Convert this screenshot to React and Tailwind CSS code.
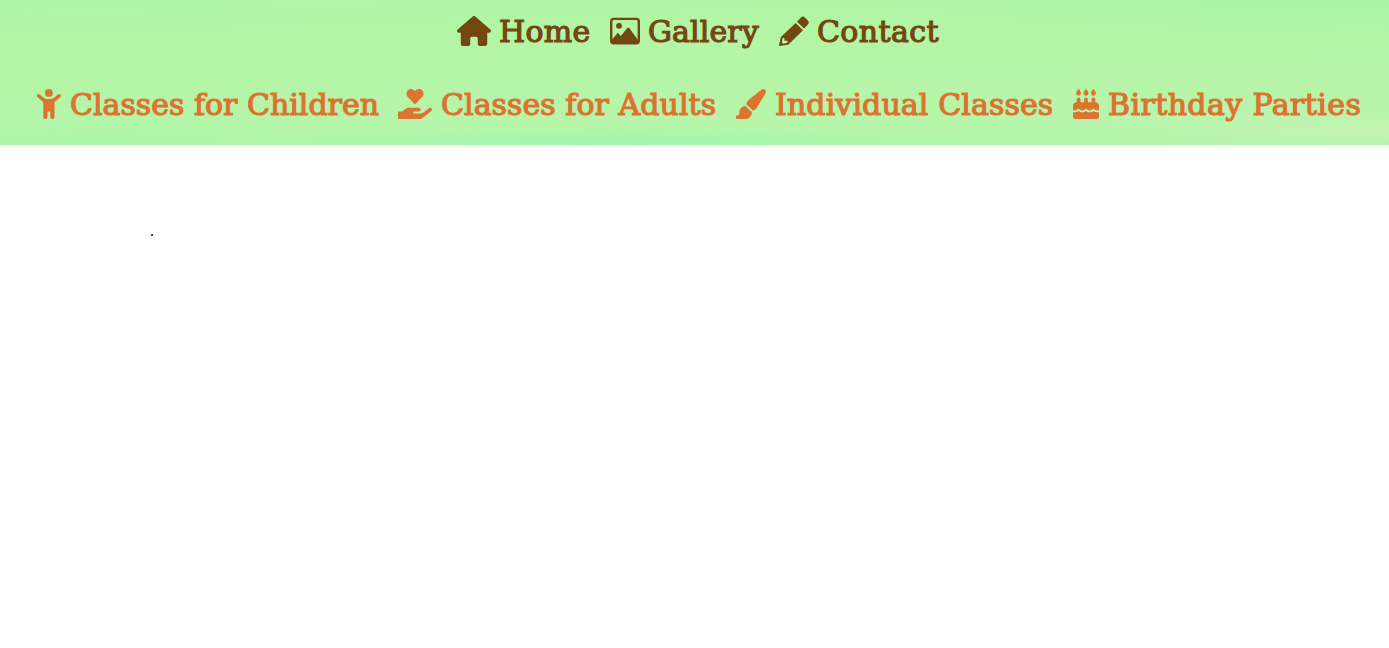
import { FaHouse, FaPaintbrush, FaCakeCandles } from "react-icons/fa6";
import { FaHandHoldingHeart } from "react-icons/fa";

function ImageIcon({ className }) {
  return (
    <svg viewBox="0 0 30 30" fill="currentColor" className={className}>
      <rect x="1.2" y="2.9" width="27.6" height="24.4" rx="2.6" fill="none" stroke="currentColor" strokeWidth="2.4" />
      <circle cx="9" cy="9.8" r="2.9" />
      <path d="M2 27V23.6L7.4 17.3Q7.9 16.8 8.4 17.3L10.8 20L17.6 11.8Q18.3 11 19 11.8L28 24V27Z" />
    </svg>
  );
}

function PencilIcon({ className }) {
  return (
    <svg viewBox="0 0 30 30" fill="currentColor" className={className}>
      <path d="M18 5.7L22 1.3Q23.8-.5 25.6 1.3L28.9 4.6Q30.6 6.5 28.9 8.4L25 12.4Z" />
      <path fillRule="evenodd" d="M16.7 6.9L24 14.3L10 28Q9.4 28.5 8.6 28.7L.8 30Q-.1 30.1 0 29.2L1.6 21.9Q1.8 21 2.4 20.4ZM4.1 22L5.4 22V24.8H8.5V26.2L7.8 26.9L4.2 27.7L2.8 26.4L3.5 22.6Z" />
    </svg>
  );
}

function ChildIcon({ className }) {
  return (
    <svg viewBox="0 0 24 30" fill="currentColor" className={className}>
      <circle cx="11.9" cy="3.9" r="3.9" />
      <path d="M1.8 6.8L6.4 10.8Q7.8 11.8 9.6 11.8H14.2Q16 11.8 17.4 10.8L22 6.8" fill="none" stroke="currentColor" strokeWidth="3.6" strokeLinecap="round" strokeLinejoin="round" />
      <path d="M6.3 11H17.5V28.1a2.1 1.9 0 0 1-4.2 0V22.5H10.5V28.1a2.1 1.9 0 0 1-4.2 0Z" />
    </svg>
  );
}

const mainLinks = [
  { label: "Home", Icon: FaHouse, box: "w-[153px]", icon: "w-[34px]", text: "ml-[8px] tracking-[0.3px]" },
  { label: "Gallery", Icon: ImageIcon, box: "w-[169px]", icon: "w-[30px]", text: "ml-[8px] tracking-[0.1px]" },
  { label: "Contact", Icon: PencilIcon, box: "w-[162px]", icon: "w-[30px]", text: "ml-[8px] tracking-[0.4px]" },
];

const classLinks = [
  { label: "Classes for Children", Icon: ChildIcon, box: "w-[361px]", icon: "w-[24px]", text: "ml-[9px]" },
  { label: "Classes for Adults", Icon: FaHandHoldingHeart, box: "w-[336px]", icon: "w-[34px]", text: "ml-[9px] tracking-[0.05px]" },
  { label: "Individual Classes", Icon: FaPaintbrush, box: "w-[339px]", icon: "w-[32px]", text: "ml-[9px] tracking-[0.1px]" },
  { label: "Birthday Parties", Icon: FaCakeCandles, box: "w-[290px]", icon: "w-[26px]", text: "ml-[9px] tracking-[0.4px]" },
];

function NavLink({ label, Icon, box, icon, text }) {
  return (
    <a className={"flex shrink-0 items-center whitespace-nowrap " + box}>
      <Icon preserveAspectRatio="none" className={"h-[30px] shrink-0 " + icon} />
      <span className={"pt-[2px] leading-[40px] [-webkit-text-stroke:1.2px_currentColor] " + text}>{label}</span>
    </a>
  );
}

export default function App() {
  return (
    <div className="min-h-[648px] bg-white font-['DejaVu_Serif',serif] text-[30px]">
      <header className="h-[145px] overflow-hidden bg-[#b4f6a8] bg-[radial-gradient(ellipse_380px_22px_at_610px_145px,#a2f6ae_0%,transparent_100%),radial-gradient(ellipse_420px_30px_at_1389px_130px,#c2f4b2_0%,transparent_100%),radial-gradient(ellipse_420px_40px_at_1300px_0px,#a9f6a5_0%,transparent_100%),radial-gradient(ellipse_400px_40px_at_100px_145px,#abf6aa_0%,transparent_100%),linear-gradient(178deg,#aef6a5_0%,#b5f5a6_45%,#b8f5aa_75%,#aef6ab_100%)]">
        <nav className="flex h-[62px] items-center pl-[457px] text-[#744610]">
          {mainLinks.map((link) => <NavLink key={link.label} {...link} />)}
        </nav>
        <nav className="mt-[11px] flex h-[62px] items-center pl-[37px] text-[#dc7330]">
          {classLinks.map((link) => <NavLink key={link.label} {...link} />)}
        </nav>
      </header>
      <main className="pt-[79px] pl-[150px] font-['Liberation_Serif',serif] text-[16px] leading-[14px] text-black">.</main>
    </div>
  );
}
